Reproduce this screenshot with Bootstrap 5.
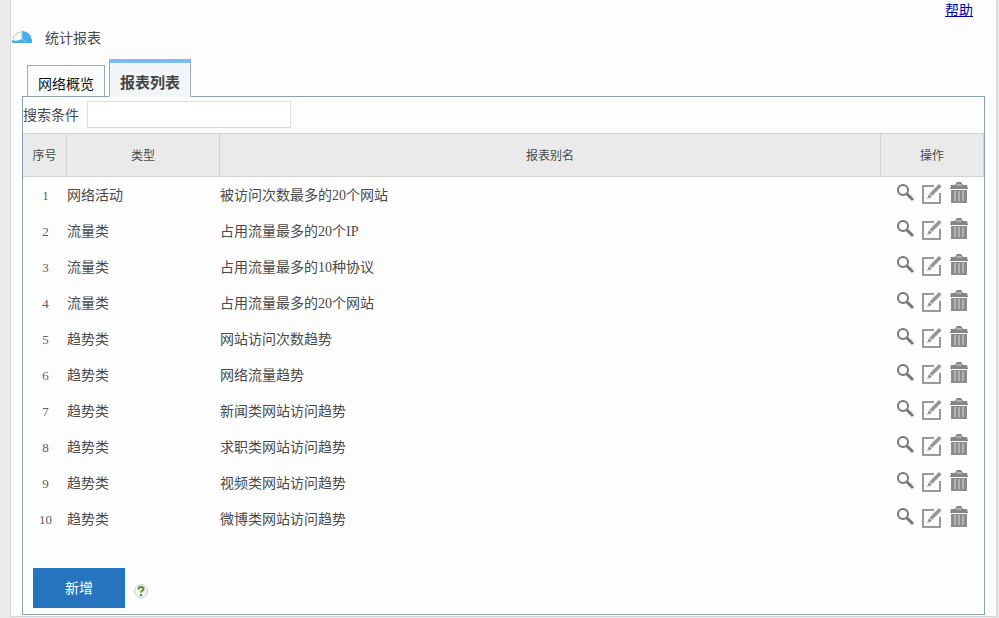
<!DOCTYPE html>
<html lang="zh-CN">
<head>
<meta charset="utf-8">
<meta name="viewport" content="width=device-width, initial-scale=1">
<title>统计报表</title>
<link href="https://cdn.jsdelivr.net/npm/bootstrap@5.3.0/dist/css/bootstrap.min.css" rel="stylesheet">
<style>
  body { background: #ebebeb; color: #4a4a4a; font: 14px/20px "Liberation Serif", "Noto Sans CJK SC", sans-serif; padding: 0 1px 1px 10px; }
  .page-sheet { background: #fdfdfd; border: 1px solid #d6d6d6; border-top: 0; border-right: 2px solid #dcdcdc; min-height: calc(100vh - 1px); }
  .help-bar { padding: 1px 23px 0 0; }
  .help-link { color: #0000a8; }
  .page-title { font-size: 14px; line-height: 20px; }
  .report-wrap { padding: 2px 11px 1px; }
  .report-tabs { gap: 4px; margin: 0 0 -1px 5px; }
  .report-tabs .nav-link { height: 32px; padding: 9px 10px 0; border: 1px solid #99a9bd; border-bottom-color: #8ba1ae; border-radius: 0; color: #111; background: #fafcfc; line-height: 20px; }
  .report-tabs .nav-link.active { height: 38px; padding-top: 10px; border-top: 4px solid #7cbbf0; border-bottom-color: #f3f6f8; background: #f3f6f8; color: #444; font-size: 15px; font-weight: 700; position: relative; }
  .report-panel { border: 1px solid #8ba1ae; }
  .search-row { padding: 4px 0 5px; }
  .search-row label { padding-top: 3px; }
  .search-box { width: 204px; height: 27px; border: 1px solid #dcdcdc; border-radius: 0; padding: 2px 6px; font-size: 14px; }
  .report-table { table-layout: fixed; border-collapse: separate; border-spacing: 0; --bs-table-bg: transparent; color: inherit; }
  .report-table th { height: 44px; padding: 2px 0 0; background: #eaeaea; color: #4a4a4a; border: solid #d2d2d2; border-width: 1px 1px 1px 0; font-size: 12px; font-weight: 400; text-align: center; vertical-align: middle; }
  .report-table td { height: 36px; padding: 2px 0 0; border: 0; color: #4a4a4a; vertical-align: middle; }
  .report-table .cell-no { padding-left: 1px; font-size: 13px; color: #606060; text-align: center; }
  .col-no { width: 44px; }
  .col-kind { width: 153px; }
  .col-ops { width: 103px; }
  .ops-set { gap: 5px; padding: 0 0 6px 13px; }
  .ops-set .btn { line-height: 0; }
  .footer-bar { padding: 31px 10px 6px; }
  .btn-new { width: 92px; height: 40px; background: #2673be; color: #fff; border-radius: 0; font-size: 14px; }
  .btn-new:hover { background: #1e62a5; color: #fff; }
</style>
<script src="https://cdn.jsdelivr.net/npm/bootstrap@5.3.0/dist/js/bootstrap.bundle.min.js" defer></script>
</head>
<body>
<svg class="d-none" aria-hidden="true">
  <symbol id="ico-view" viewBox="0 0 22 24"><circle cx="9" cy="9" r="5" fill="none" stroke="#777" stroke-width="2"/><path d="M12.500 12.500 19 19" stroke="#777" stroke-width="3" fill="none"/></symbol>
  <symbol id="ico-edit" viewBox="0 0 22 24"><path d="M13 5H2v17h17v-10" fill="none" stroke="#999" stroke-width="2"/><path d="M6 18l2-5 3 3z M8.500 12.500 18 3l2.500 2.500-9.500 9.500z" fill="#959595"/></symbol>
  <symbol id="ico-delete" viewBox="0 0 20 24"><path d="M6 4l2-3h4l2 3h4l1 4H1l1-4z" fill="#858585"/><path d="M7.500 4h5" stroke="#ddd"/><path d="M2 9h16v13H2z" fill="#8c8c8c"/><path d="M6 10v10M10 10v10M14 10v10" stroke="#ddd" stroke-width="1"/></symbol>
</svg>
<main class="page-sheet d-flex flex-column">
  <div class="help-bar d-flex justify-content-end"><a class="help-link text-decoration-underline" href="#help">帮助</a></div>
  <header class="d-flex align-items-center pt-2 pb-2">
    <svg width="22" height="16" viewBox="0 0 22 16" aria-hidden="true"><path d="M2 9a9 8 0 0 1 8-8v8z" fill="#fafaf6"/><path d="M2 8q2-6 8-7" fill="none" stroke="#c3c0b0"/><path d="M11 0a10 10 0 0 1 10 9v3H1V9q5 2 10-1z" fill="#45aeea"/><path d="M11 1v7l4 3" fill="none" stroke="#8fd0f4"/></svg>
    <h1 class="page-title fw-normal m-0 ps-2 ms-1">统计报表</h1>
  </header>
  <div class="flex-grow-1 d-flex flex-column report-wrap">
    <nav class="nav report-tabs align-items-end">
      <a class="nav-link" href="#overview">网络概览</a>
      <a class="nav-link active" href="#list" aria-current="page">报表列表</a>
    </nav>
    <section class="report-panel flex-grow-1">
      <form class="search-row d-flex align-items-center gap-2">
        <label for="criteria">搜索条件</label>
        <input class="form-control search-box" id="criteria" type="text">
      </form>
      <table class="table report-table m-0">
        <thead><tr><th class="col-no" scope="col">序号</th><th class="col-kind" scope="col">类型</th><th scope="col">报表别名</th><th class="col-ops" scope="col">操作</th></tr></thead>
        <tbody id="rows"></tbody>
      </table>
      <div class="d-flex align-items-center gap-2 footer-bar">
        <button class="btn btn-new border-0 p-0" type="button">新增</button>
        <button class="btn border-0 p-0 lh-1 mt-1" type="button" aria-label="帮助">
          <svg width="16" height="16" viewBox="0 0 16 16"><circle cx="8" cy="8" r="6.500" fill="#f0f2ed" stroke="#ccd0c8"/><path d="M5.500 6.500V6q0-2 2.500-2t2.500 2q0 1-1.500 2-1 .7-1 1.500" fill="none" stroke="#5c8a35" stroke-width="2"/><path d="M7 11h2v2H7z" fill="#5c8a35"/></svg>
        </button>
      </div>
    </section>
  </div>
</main>
<script>
  const reports = [
    ["网络活动", "被访问次数最多的20个网站"],
    ["流量类", "占用流量最多的20个IP"],
    ["流量类", "占用流量最多的10种协议"],
    ["流量类", "占用流量最多的20个网站"],
    ["趋势类", "网站访问次数趋势"],
    ["趋势类", "网络流量趋势"],
    ["趋势类", "新闻类网站访问趋势"],
    ["趋势类", "求职类网站访问趋势"],
    ["趋势类", "视频类网站访问趋势"],
    ["趋势类", "微博类网站访问趋势"]
  ];
  const action = (icon, label) =>
    `<button class="btn border-0 p-0" type="button" aria-label="${label}"><svg width="22" height="24"><use href="#${icon}"/></svg></button>`;
  document.getElementById("rows").innerHTML = reports.map(([kind, name], i) =>
    `<tr><td class="cell-no">${i + 1}</td><td>${kind}</td><td>${name}</td><td><div class="ops-set d-flex">` +
    action("ico-view", "查看") + action("ico-edit", "编辑") + action("ico-delete", "删除") +
    `</div></td></tr>`).join("");
</script>
</body>
</html>
